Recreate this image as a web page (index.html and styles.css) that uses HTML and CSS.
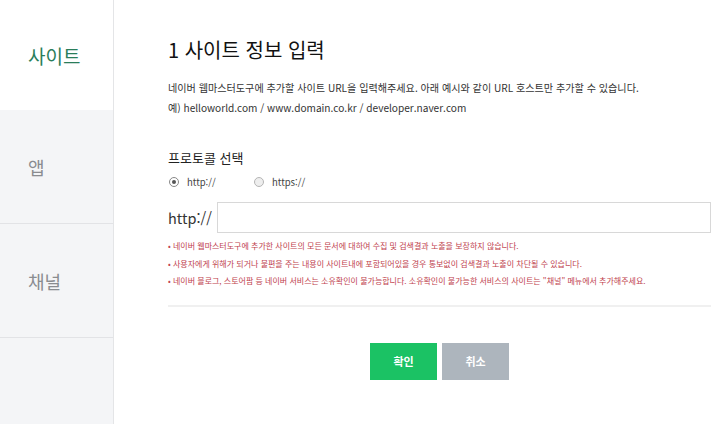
FILE: index.html
```html
<!DOCTYPE html>
<html lang="ko">
<head>
  <meta charset="UTF-8" />
  <title>사이트 정보 입력</title>
  <link rel="stylesheet" href="styles.css">
</head>
<body>
  <div class="wrap">
    <div class="side">
      <div class="tab on">사이트</div>
      <div class="tab">앱</div>
      <div class="tab">채널</div>
      <div class="tab empty"></div>
    </div>

    <div class="main">
      <h1>1 사이트 정보 입력</h1>
      <p class="desc">네이버 웹마스터도구에 추가할 사이트 URL을 입력해주세요. 아래 예시와 같이 URL 호스트만 추가할 수 있습니다.</p>
      <p class="desc">예) helloworld.com / www.domain.co.kr / developer.naver.com</p>

      <h2>프로토콜 선택</h2>
      <div class="radios">
        <label class="radio"><span class="dot checked"></span>http://</label>
        <label class="radio"><span class="dot"></span>https://</label>
      </div>

      <div class="url-row">
        <span class="prefix">http://</span>
        <input class="url" type="text" />
      </div>

      <ul class="notes">
        <li>네이버 웹마스터도구에 추가한 사이트의 모든 문서에 대하여 수집 및 검색결과 노출을 보장하지 않습니다.</li>
        <li>사용자에게 위해가 되거나 불편을 주는 내용이 사이트내에 포함되어있을 경우 통보없이 검색결과 노출이 차단될 수 있습니다.</li>
        <li>네이버 블로그, 스토어팜 등 네이버 서비스는 소유확인이 불가능합니다. 소유확인이 불가능한 서비스의 사이트는 "채널" 메뉴에서 추가해주세요.</li>
      </ul>

      <div class="btns">
        <button class="btn btn-ok">확인</button>
        <button class="btn btn-cancel">취소</button>
      </div>
    </div>
  </div>
</body>
</html>
```

FILE: styles.css
```css
body {
  margin: 0;
  font-family: "Noto Sans CJK KR", "Noto Sans", sans-serif;
  background-color: #ffffff;
  color: #222;
}
.wrap {
  display: flex;
  height: 424px;
  overflow: hidden;
}
.side {
  width: 113px;
  flex-shrink: 0;
  border-right: 1px solid #e4e5e7;
}
.tab {
  height: 113px;
  display: flex;
  align-items: center;
  padding-left: 28px;
  font-size: 18px;
  color: #8a8c90;
  background-color: #f4f5f7;
  border-bottom: 1px solid #e2e3e6;
}
.tab.on {
  height: 110px;
  font-size: 19px;
  background-color: #ffffff;
  color: #2a7d5a;
  border-bottom: none;
}
.tab.empty {
  border-bottom: none;
  height: 100px;
}
.main {
  flex: 1;
  padding: 36px 9px 0 54px;
}
h1 {
  margin: 0 0 14px;
  font-size: 20px;
  font-weight: 400;
  line-height: 28px;
  color: #111;
}
.desc {
  margin: 0;
  font-size: 10.1px;
  line-height: 20px;
  color: #333;
}
h2 {
  margin: 30px 0 6px;
  font-size: 13px;
  font-weight: 400;
  line-height: 20px;
  color: #222;
}
.radios {
  display: flex;
  font-size: 9.5px;
  color: #444;
  height: 20px;
  align-items: center;
  margin-top: -2px;
}
.radio {
  display: flex;
  align-items: center;
  width: 85px;
}
.dot {
  width: 8px;
  height: 8px;
  border: 1px solid #b5b5b5;
  border-radius: 50%;
  margin-right: 8px;
  margin-left: 1px;
  background-color: #eee;
  position: relative;
}
.dot.checked {
  background-color: #fff;
  border-color: #888;
}
.dot.checked::after {
  content: "";
  position: absolute;
  left: 2px;
  top: 2px;
  width: 4px;
  height: 4px;
  border-radius: 50%;
  background-color: #555;
}
.url-row {
  display: flex;
  align-items: center;
  margin-top: 10px;
}
.prefix {
  font-size: 14.5px;
  color: #333;
  width: 49px;
}
.url {
  flex: 1;
  border: 1px solid #d8d8d8;
  margin: 0;
  padding: 0 8px;
  box-sizing: border-box;
  height: 31px;
}
.notes {
  list-style: none;
  margin: 4px 0 0;
  padding: 0 0 15px;
  border-bottom: 2px solid #f0f0f0;
}
.notes li {
  font-size: 8px;
  line-height: 17.5px;
  color: #c0424e;
  white-space: nowrap;
}
.notes li::before {
  content: "• ";
}
.btns {
  display: flex;
  justify-content: center;
  gap: 5px;
  margin-top: 36px;
}
.btn {
  width: 67px;
  height: 37px;
  border: none;
  font-family: inherit;
  font-size: 11px;
  font-weight: 700;
  color: #fff;
  cursor: pointer;
}
.btn-ok {
  background-color: #1bc264;
}
.btn-cancel {
  background-color: #adb5bd;
}
```
